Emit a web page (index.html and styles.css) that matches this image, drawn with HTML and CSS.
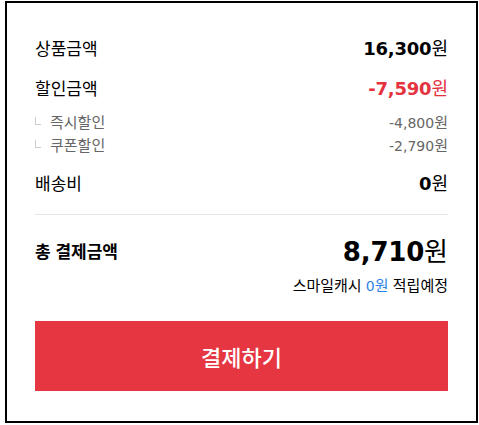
FILE: index.html
```html
<!DOCTYPE html>
<html lang="ko">
<head>
<meta charset="utf-8">
<link rel="stylesheet" href="styles.css">
</head>
<body>
<div class="card">
  <div class="row main">
    <span class="label">상품금액</span>
    <span class="amount">16,300<span class="won">원</span></span>
  </div>
  <div class="row main discount">
    <span class="label">할인금액</span>
    <span class="amount red">-7,590<span class="won">원</span></span>
  </div>
  <div class="subs">
    <div class="row sub">
      <span class="sublabel"><i class="mark"></i>즉시할인</span>
      <span class="subamount">-4,800<span class="subwon">원</span></span>
    </div>
    <div class="row sub">
      <span class="sublabel"><i class="mark"></i>쿠폰할인</span>
      <span class="subamount">-2,790<span class="subwon">원</span></span>
    </div>
  </div>
  <div class="row main ship">
    <span class="label">배송비</span>
    <span class="amount">0<span class="won">원</span></span>
  </div>
  <hr class="divider">
  <div class="row total">
    <span class="label strong">총 결제금액</span>
    <span class="amount big">8,710<span class="won">원</span></span>
  </div>
  <div class="cash">스마일캐시 <span class="blue">0</span><span class="bluek">원</span> 적립예정</div>
  <button class="pay">결제하기</button>
</div>
</body>
</html>
```
FILE: styles.css
```css
html, body {
  margin: 0;
  padding: 0;
  background: #fff;
}
body {
  padding: 1px 1px 2px 5px;
  font-family: "DejaVu Sans", "Noto Sans CJK KR", sans-serif;
  color: #000;
}
.card {
  box-sizing: border-box;
  width: 473px;
  height: 422px;
  border: 2px solid #000;
  padding: 33px 28px 30px 28px;
  display: flex;
  flex-direction: column;
}
.row {
  display: flex;
  justify-content: space-between;
  align-items: center;
}
.main {
  height: 24px;
}
.discount {
  margin-top: 16px;
}
.label {
  font-family: "Noto Sans CJK KR", sans-serif;
  font-size: 17px;
  line-height: 24px;
}
.label.strong {
  font-weight: 700;
}
.amount {
  font-size: 18px;
  font-weight: 700;
  line-height: 24px;
  letter-spacing: -0.2px;
}
.won {
  font-family: "Noto Sans CJK KR", sans-serif;
  font-weight: 400;
  letter-spacing: 0;
}
.red {
  color: #e4333e;
}
.subs {
  margin-top: 10px;
}
.sub {
  height: 23px;
}
.sublabel {
  font-family: "Noto Sans CJK KR", sans-serif;
  font-size: 15px;
  color: #666;
  display: flex;
  align-items: center;
}
.mark {
  display: inline-block;
  width: 5px;
  height: 7px;
  border-left: 1px solid #ccc;
  border-bottom: 1px solid #ccc;
  margin-right: 9px;
  margin-top: -2px;
}
.subamount {
  font-size: 14px;
  color: #666;
}
.subwon {
  font-family: "Noto Sans CJK KR", sans-serif;
  font-size: 15px;
}
.ship {
  margin-top: 15px;
}
.divider {
  border: 0;
  border-top: 1px solid #e6e6e6;
  margin: 19px 0 0 0;
  height: 0;
}
.total {
  margin-top: 19px;
  height: 34px;
}
.amount.big {
  font-size: 26px;
  line-height: 34px;
}
.cash {
  margin-top: 7px;
  text-align: right;
  font-family: "Noto Sans CJK KR", sans-serif;
  font-size: 15px;
  line-height: 20px;
}
.blue {
  color: #3184e6;
  font-family: "DejaVu Sans", sans-serif;
  font-size: 14px;
}
.bluek {
  color: #3184e6;
}
.pay {
  margin-top: 25px;
  height: 70px;
  width: 100%;
  border: 0;
  background: #e53641;
  color: #fff;
  font-family: "Noto Sans CJK KR", sans-serif;
  font-size: 22px;
  font-weight: 500;
  padding: 0;
}
```
